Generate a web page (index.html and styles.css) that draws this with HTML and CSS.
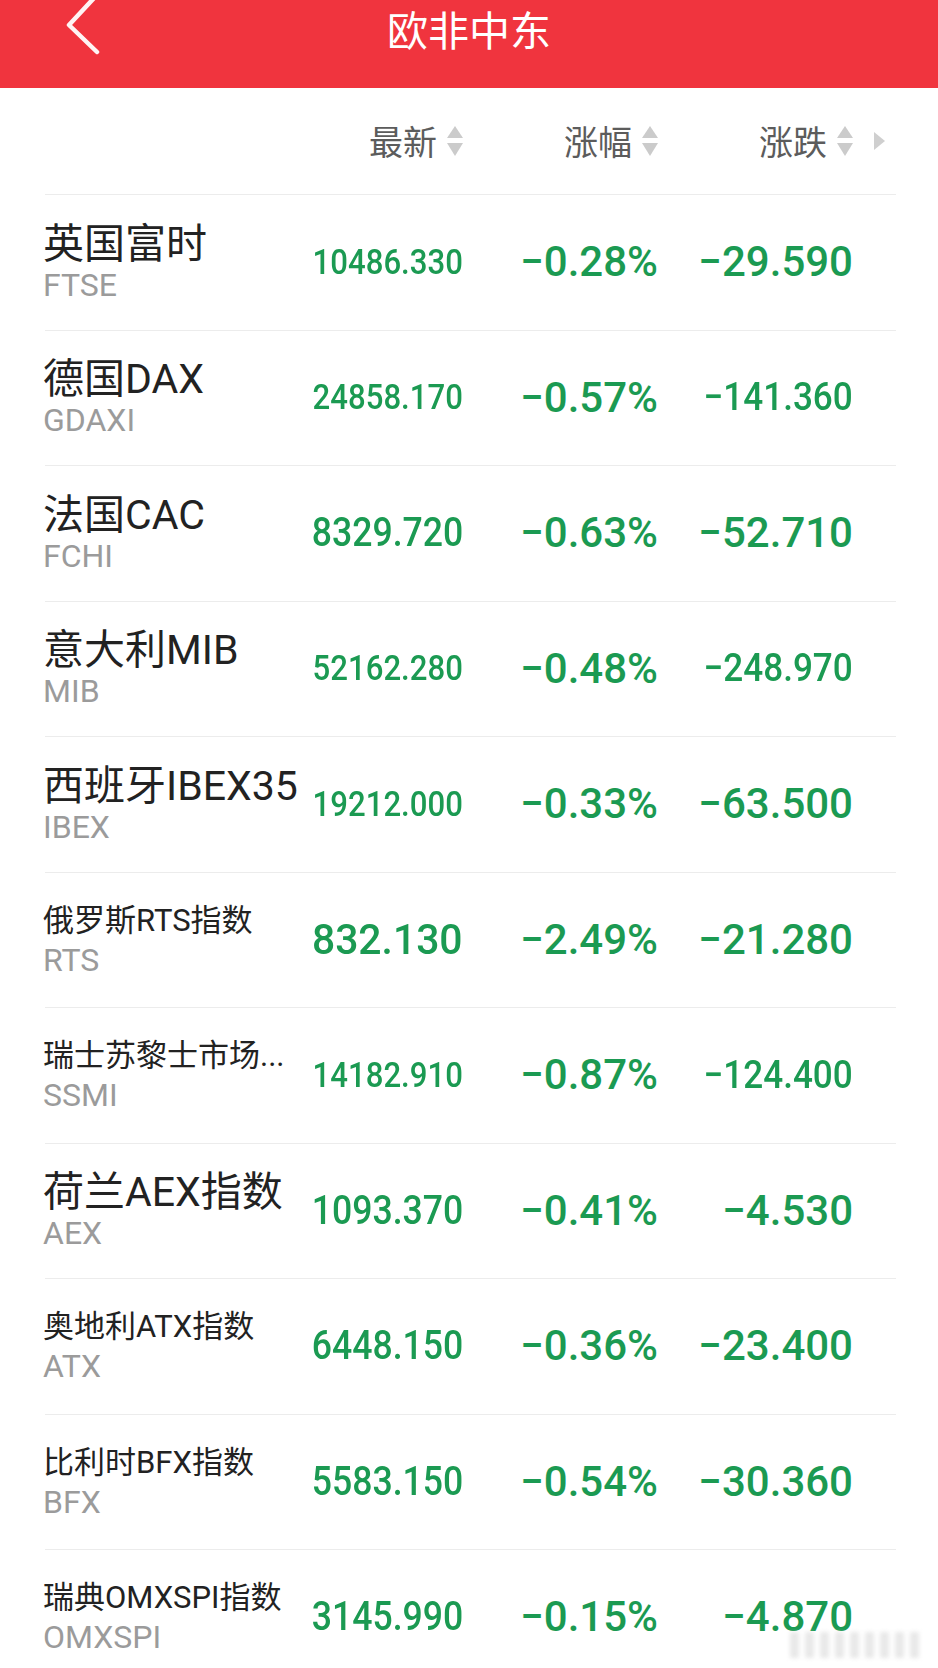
FILE: index.html
```html
<!DOCTYPE html>
<html lang="zh-CN">
<head>
    <meta charset="UTF-8">
    <meta name="viewport" content="width=device-width, initial-scale=1.0">
    <title>欧非中东</title>
    <link rel="stylesheet" href="styles.css">
</head>
<body>
    <!-- Top bar -->
    <header class="topbar">
        <div class="back">
            <svg width="44" height="56" viewBox="0 0 44 56">
                <polyline points="35,-3 9,25 37,52" />
            </svg>
        </div>
        <h1 class="title">欧非中东</h1>
        <div></div>
    </header>

    <!-- Column header -->
    <div class="colhead">
        <div></div>
        <div class="sort">最新<svg class="arrows" viewBox="0 0 16 30"><path d="M8 0 L16 12 H0 Z"/><path d="M0 17 H16 L8 30 Z"/></svg></div>
        <div class="sort">涨幅<svg class="arrows" viewBox="0 0 16 30"><path d="M8 0 L16 12 H0 Z"/><path d="M0 17 H16 L8 30 Z"/></svg></div>
        <div class="sort">涨跌<svg class="arrows" viewBox="0 0 16 30"><path d="M8 0 L16 12 H0 Z"/><path d="M0 17 H16 L8 30 Z"/></svg></div>
        <svg class="more" viewBox="0 0 11 18"><path d="M0 0 L11 9 L0 18 Z"/></svg>
    </div>

    <!-- Index list -->
    <ul class="list">
        <li class="row">
            <div class="name"><div class="cn">英国富时</div><div class="code">FTSE</div></div>
            <div class="val"><span class="num c1 s8">10486.330</span></div>
            <div class="val"><span class="num">−0.28%</span></div>
            <div class="val"><span class="num">−29.590</span></div>
        </li>
        <li class="row">
            <div class="name"><div class="cn">德国DAX</div><div class="code">GDAXI</div></div>
            <div class="val"><span class="num c1 s8">24858.170</span></div>
            <div class="val"><span class="num">−0.57%</span></div>
            <div class="val"><span class="num c3">−141.360</span></div>
        </li>
        <li class="row">
            <div class="name"><div class="cn">法国CAC</div><div class="code">FCHI</div></div>
            <div class="val"><span class="num c1 s7">8329.720</span></div>
            <div class="val"><span class="num">−0.63%</span></div>
            <div class="val"><span class="num">−52.710</span></div>
        </li>
        <li class="row">
            <div class="name"><div class="cn">意大利MIB</div><div class="code">MIB</div></div>
            <div class="val"><span class="num c1 s8">52162.280</span></div>
            <div class="val"><span class="num">−0.48%</span></div>
            <div class="val"><span class="num c3">−248.970</span></div>
        </li>
        <li class="row">
            <div class="name"><div class="cn">西班牙IBEX35</div><div class="code">IBEX</div></div>
            <div class="val"><span class="num c1 s8">19212.000</span></div>
            <div class="val"><span class="num">−0.33%</span></div>
            <div class="val"><span class="num">−63.500</span></div>
        </li>
        <li class="row">
            <div class="name"><div class="cn sm">俄罗斯RTS指数</div><div class="code">RTS</div></div>
            <div class="val"><span class="num c1 s6">832.130</span></div>
            <div class="val"><span class="num">−2.49%</span></div>
            <div class="val"><span class="num">−21.280</span></div>
        </li>
        <li class="row">
            <div class="name"><div class="cn sm">瑞士苏黎士市场...</div><div class="code">SSMI</div></div>
            <div class="val"><span class="num c1 s8">14182.910</span></div>
            <div class="val"><span class="num">−0.87%</span></div>
            <div class="val"><span class="num c3">−124.400</span></div>
        </li>
        <li class="row">
            <div class="name"><div class="cn">荷兰AEX指数</div><div class="code">AEX</div></div>
            <div class="val"><span class="num c1 s7">1093.370</span></div>
            <div class="val"><span class="num">−0.41%</span></div>
            <div class="val"><span class="num">−4.530</span></div>
        </li>
        <li class="row">
            <div class="name"><div class="cn sm">奥地利ATX指数</div><div class="code">ATX</div></div>
            <div class="val"><span class="num c1 s7">6448.150</span></div>
            <div class="val"><span class="num">−0.36%</span></div>
            <div class="val"><span class="num">−23.400</span></div>
        </li>
        <li class="row">
            <div class="name"><div class="cn sm">比利时BFX指数</div><div class="code">BFX</div></div>
            <div class="val"><span class="num c1 s7">5583.150</span></div>
            <div class="val"><span class="num">−0.54%</span></div>
            <div class="val"><span class="num">−30.360</span></div>
        </li>
        <li class="row">
            <div class="name"><div class="cn sm">瑞典OMXSPI指数</div><div class="code">OMXSPI</div></div>
            <div class="val"><span class="num c1 s7">3145.990</span></div>
            <div class="val"><span class="num">−0.15%</span></div>
            <div class="val"><span class="num">−4.870</span></div>
        </li>
    </ul>

    <!-- faint watermark in the corner -->
    <div class="watermark"></div>
</body>
</html>
```

FILE: styles.css
```css
* {
    box-sizing: border-box;
    margin: 0;
    padding: 0;
}

body {
    position: relative;
    width: 938px;
    height: 1668px;
    overflow: hidden;
    background: #ffffff;
    font-family: Roboto, 'Noto Sans CJK SC', sans-serif;
    color: #222222;
}

/* Top bar */
.topbar {
    display: grid;
    grid-template-columns: 1fr auto 1fr;
    align-items: start;
    height: 88px;
    background: #f0343e;
}

.back {
    padding-left: 60px;
}

.back svg {
    display: block;
    overflow: visible;
}

.back polyline {
    fill: none;
    stroke: #fff4f4;
    stroke-width: 4.5;
    stroke-linecap: round;
    stroke-linejoin: round;
}

.title {
    padding-top: 8px;
    font-family: 'Noto Sans CJK SC', sans-serif;
    font-size: 41px;
    font-weight: 400;
    line-height: 41px;
    color: #ffffff;
}

/* Column header */
.colhead,
.row {
    display: grid;
    grid-template-columns: 1fr 150px 195px 195px 43px;
    align-items: center;
    margin: 0 42px 0 45px;
}

.colhead {
    height: 106px;
}

.sort {
    display: flex;
    align-items: center;
    justify-content: flex-end;
    font-family: 'Noto Sans CJK SC', sans-serif;
    font-size: 34px;
    line-height: 40px;
    color: #5c5c5c;
}

.arrows {
    width: 16px;
    height: 30px;
    margin-left: 10px;
    fill: #cbcbcb;
}

.more {
    width: 11px;
    height: 18px;
    margin-left: 21px;
    fill: #cfcfcf;
}

/* Rows */
.list {
    list-style: none;
}

.row {
    height: 135.5px;
    border-top: 1px solid #ececec;
}

.name {
    min-width: 0;
    margin-left: -2px;
}

.cn {
    font-size: 41px;
    line-height: 45px;
    color: #222222;
    white-space: nowrap;
}

.cn.sm {
    font-size: 31px;
    line-height: 37px;
    margin-bottom: 3px;
}

.code {
    font-size: 32px;
    line-height: 36px;
    color: #9b9b9b;
}

.val {
    display: flex;
    justify-content: flex-end;
}

.num {
    display: inline-block;
    font-family: Roboto, sans-serif;
    font-size: 42px;
    font-weight: 500;
    line-height: 1;
    color: #1b9a52;
    white-space: nowrap;
    transform-origin: right center;
}

.c1 {
    transform: scaleX(0.89);
}

.s8 {
    font-size: 35px;
}

.s7 {
    font-size: 40px;
}

.s6 {
    font-size: 43px;
    transform: scaleX(0.95);
}

.c3 {
    font-size: 39px;
    transform: scaleX(0.9);
}

.watermark {
    position: absolute;
    left: 790px;
    top: 1632px;
    width: 135px;
    height: 26px;
    background: repeating-linear-gradient(90deg, #d6d6d6 0 9px, transparent 9px 15px);
    opacity: 0.55;
    filter: blur(2px);
}
```
